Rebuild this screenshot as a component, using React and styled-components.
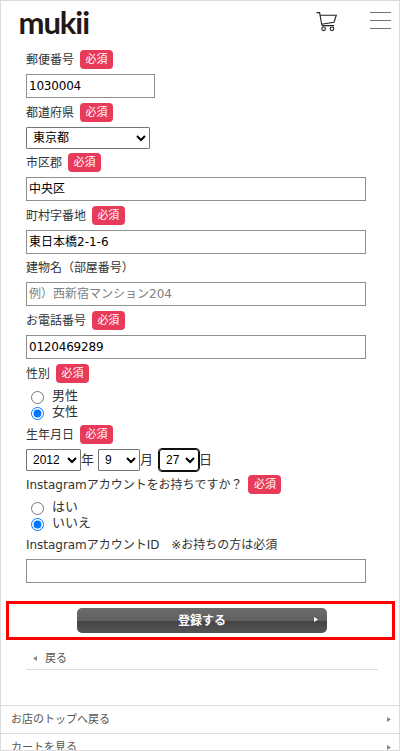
import React from 'react'
import styled, { createGlobalStyle } from 'styled-components'


const GlobalStyle = createGlobalStyle`
  * {
    box-sizing: border-box;
  }

  body {
    margin: 0;
    overflow: hidden;
    background-color: white;
    font-family: "DejaVu Sans", "Noto Sans CJK JP", sans-serif;
    font-size: 12px;
    color: #333;
  }
`;

const Page = styled.div`
  width: 400px;
  height: 751px;
  border: 1px solid #dcdcdc;
  background-color: white;
  overflow: hidden;
`;

const Header = styled.header`
  height: 49px;
  padding: 0 8px 0 17px;
  display: flex;
  align-items: flex-start;
`;

const Logo = styled.svg`
  width: 84px;
  height: 48px;
  margin-right: auto;
  overflow: visible;
`;

const CartIcon = styled.svg`
  width: 22px;
  height: 22px;
  margin: 10px 32px 0 0;
`;

const MenuButton = styled.button`
  width: 21px;
  height: 17px;
  margin-top: 11px;
  padding: 0;
  border: none;
  background: none;
  display: flex;
  flex-direction: column;
  justify-content: space-between;
`;

const MenuLine = styled.span`
  width: 100%;
  height: 1px;
  background-color: #777;
`;

const Form = styled.form`
  padding: 0 33px 0 25px;
`;

const Field = styled.div`
  height: ${props => props.$height}px;
`;

const Label = styled.div`
  height: 19px;
  margin-bottom: 5px;
  display: flex;
  align-items: flex-start;
  line-height: 21px;
  letter-spacing: -0.03px;
  white-space: pre;
`;

const Required = styled.span`
  width: 33px;
  height: 19px;
  margin-left: 6px;
  border-radius: 4px;
  background-color: #e83a59;
  color: white;
  font-size: 11px;
  line-height: 19px;
  text-align: center;
`;

const Input = styled.input`
  display: block;
  width: ${props => props.$width || 340}px;
  height: 24px;
  padding: 0 2px ${props => props.$lift || 0}px;
  border: 1px solid #8f8f8f;
  border-radius: 0;
  color: black;
  font-family: inherit;
  font-size: 12px;
  letter-spacing: ${props => props.$spacing || 0}px;

  &::placeholder {
    color: #808080;
  }
`;

const Select = styled.select`
  width: ${props => props.$width}px;
  height: 22px;
  padding: 0 0 0 2px;
  border: 1px solid ${props => (props.$active ? '#101010' : '#767676')};
  border-radius: ${props => (props.$active ? 3 : 1)}px;
  outline: ${props => (props.$active ? '1px solid #101010' : 'none')};
  background-color: white;
  color: black;
  font-family: "Liberation Sans", "Noto Sans CJK JP", sans-serif;
  font-size: 12px;
`;

const DateRow = styled.div`
  display: flex;
  align-items: center;
  font-size: 13px;
  line-height: 22px;
`;

const Unit = styled.span`
  width: ${props => props.$width || 17}px;
`;

const RadioList = styled.div`
  padding: 2px 0 0 5px;
`;

const RadioLabel = styled.label`
  height: 16px;
  display: flex;
  align-items: flex-start;
  font-size: 13px;
  line-height: 12px;
`;

const Radio = styled.input`
  width: 13px;
  height: 13px;
  margin: 1px 8px 0 0;
`;

const SubmitFrame = styled.div`
  width: 389px;
  height: 39px;
  margin-left: 5px;
  border: 3px solid #fe0000;
  display: flex;
  align-items: center;
  justify-content: center;
`;

const SubmitButton = styled.button`
  width: 250px;
  height: 25px;
  margin-left: 3px;
  padding: 0 9px 0 13px;
  border: none;
  border-radius: 5px;
  background: linear-gradient(#6b6b6b 0%, #606060 52%, #434343 53%, #565656 100%);
  color: white;
  font-family: inherit;
  font-size: 12px;
  font-weight: bold;
  line-height: 23px;
  display: flex;
  align-items: center;

  svg {
    margin-bottom: 2px;
  }
`;

const SubmitText = styled.span`
  flex: 1;
  padding-top: 2px;
  text-align: center;
`;

const Arrow = styled.svg`
  width: 4px;
  height: 5px;
  flex: none;
  fill: ${props => props.$color || '#888'};
`;

const Back = styled.a`
  height: 30px;
  margin: 0 21px 0 25px;
  padding: 0 0 5px 7px;
  border-bottom: 1px solid #dcdcdc;
  display: flex;
  align-items: flex-end;
  gap: 8px;
  color: #555;
  font-size: 11px;
  line-height: 11px;

  svg {
    margin-bottom: 3px;
  }
`;

const FooterNav = styled.nav`
  margin-top: 35px;
`;

const FooterLink = styled.a`
  height: 28px;
  padding: 0 8px 0 10px;
  border-top: 1px solid #dcdcdc;
  display: flex;
  align-items: center;
  justify-content: space-between;
  color: #555;
  font-size: 11px;
  line-height: 16px;
`;

const RightArrow = ({ color }) => (
    <Arrow $color={color} viewBox="0 0 4 5"><path d="M0 0L4 2.5L0 5Z" /></Arrow>
)

const RadioGroup = ({ name, options, selected }) => (
    <RadioList>
        {options.map(option => (
            <RadioLabel key={option}>
                <Radio type="radio" name={name} defaultChecked={option === selected} />
                {option}
            </RadioLabel>
        ))}
    </RadioList>
)

const FormField = ({ label, required, height, children }) => (
    <Field $height={height}>
        <Label>{label}{required && <Required>必須</Required>}</Label>
        {children}
    </Field>
)

const App = () => {
    return (
        <Page>
            <GlobalStyle />
            <Header>
                <Logo viewBox="0 0 84 48">
                    <text x="0.5" y="33" fontFamily="Lato, sans-serif" fontWeight="700" fontSize="31" fill="#231815" textLength="71.5" lengthAdjust="spacing">mukii</text>
                </Logo>
                <CartIcon viewBox="0 0 22 22" fill="none" stroke="#222" strokeWidth="1.1">
                    <path d="M0.5 1.6H3.6L5.6 13.2L18 11.2L20.3 4.2H4.2" />
                    <path d="M5.6 13.2L6.4 14.6H18" />
                    <circle cx="7.6" cy="17.8" r="1.8" />
                    <circle cx="16" cy="17.8" r="1.8" />
                </CartIcon>
                <MenuButton type="button">
                    <MenuLine />
                    <MenuLine />
                    <MenuLine />
                </MenuButton>
            </Header>

            <Form>
                <FormField label="郵便番号" required height={53}>
                    <Input $width={129} $spacing={-0.2} defaultValue="1030004" />
                </FormField>
                <FormField label="都道府県" required height={50}>
                    <Select $width={124}><option>東京都</option></Select>
                </FormField>
                <FormField label="市区郡" required height={53}>
                    <Input $lift={3} defaultValue="中央区" />
                </FormField>
                <FormField label="町村字番地" required height={52}>
                    <Input $lift={3} defaultValue="東日本橋2-1-6" />
                </FormField>
                <FormField label="建物名（部屋番号）" height={53}>
                    <Input placeholder="例）西新宿マンション204" />
                </FormField>
                <FormField label="お電話番号" required height={53}>
                    <Input $spacing={-0.2} defaultValue="0120469289" />
                </FormField>
                <FormField label="性別" required height={61}>
                    <RadioGroup name="gender" options={['男性', '女性']} selected="女性" />
                </FormField>
                <FormField label="生年月日" required height={50}>
                    <DateRow>
                        <Select $width={55}><option>2012</option></Select>
                        <Unit>年</Unit>
                        <Select $width={42}><option>9</option></Select>
                        <Unit $width={19}>月</Unit>
                        <Select $width={40} $active><option>27</option></Select>
                        <Unit>日</Unit>
                    </DateRow>
                </FormField>
                <FormField label="Instagramアカウントをお持ちですか？" required height={60}>
                    <RadioGroup name="instagram" options={['はい', 'いいえ']} selected="いいえ" />
                </FormField>
                <FormField label="InstagramアカウントID　※お持ちの方は必須" height={66}>
                    <Input />
                </FormField>
            </Form>

            <SubmitFrame>
                <SubmitButton type="button">
                    <SubmitText>登録する</SubmitText>
                    <RightArrow color="white" />
                </SubmitButton>
            </SubmitFrame>

            <Back>
                <Arrow viewBox="0 0 4 5"><path d="M4 0L0 2.5L4 5Z" /></Arrow>
                戻る
            </Back>

            <FooterNav>
                <FooterLink>お店のトップへ戻る<RightArrow /></FooterLink>
                <FooterLink>カートを見る<RightArrow /></FooterLink>
            </FooterNav>
        </Page>
    )
}

export default App
